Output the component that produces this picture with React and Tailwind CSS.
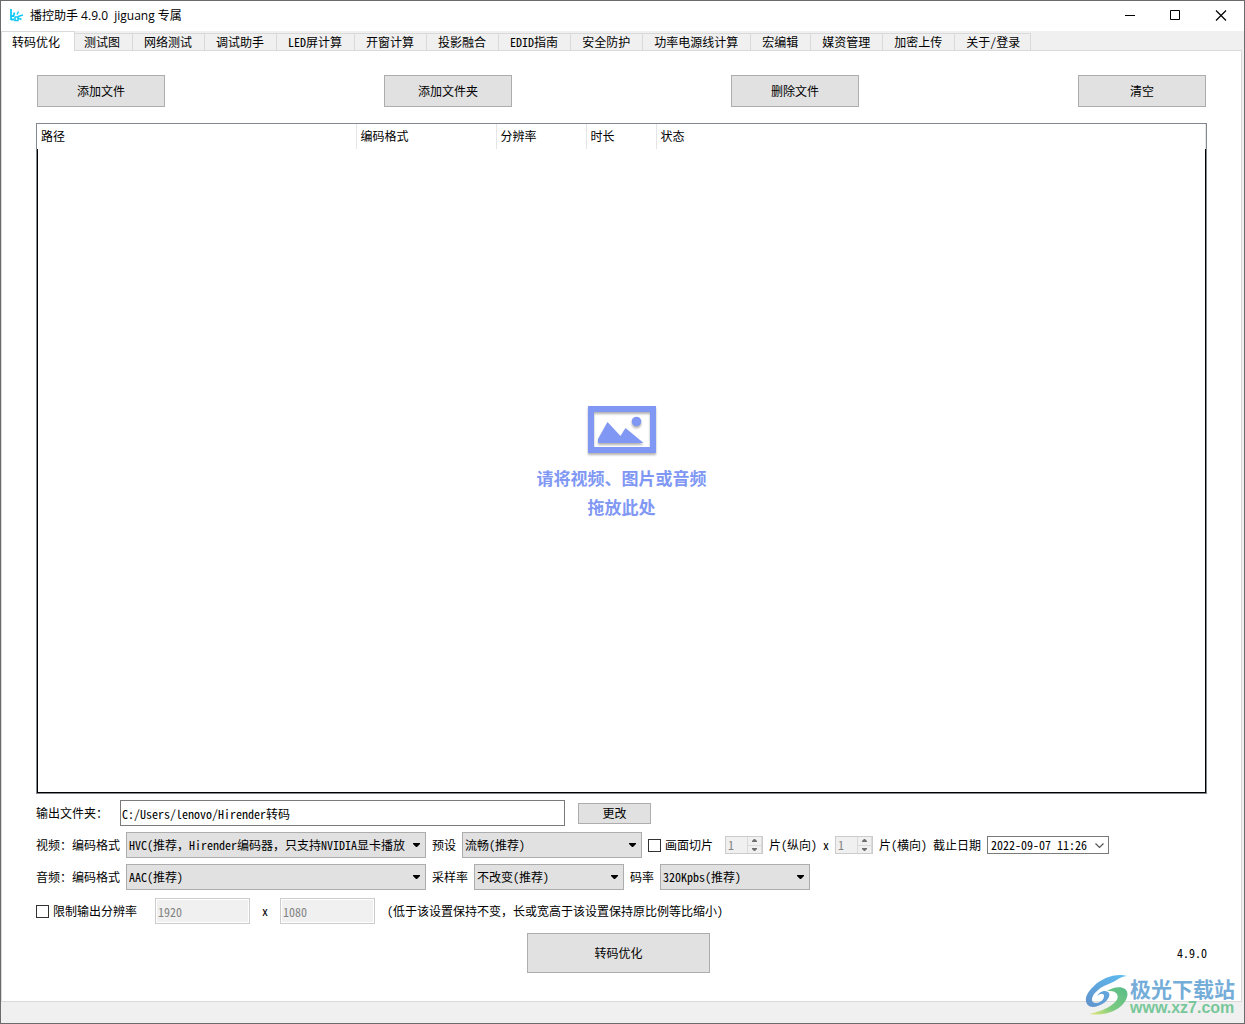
import React, { useState } from "react";

const tabs = [
    "转码优化",
    "测试图",
    "网络测试",
    "调试助手",
    "LED屏计算",
    "开窗计算",
    "投影融合",
    "EDID指南",
    "安全防护",
    "功率电源线计算",
    "宏编辑",
    "媒资管理",
    "加密上传",
    "关于/登录",
];

const columns = [
    { name: "路径", width: "w-[319px]" },
    { name: "编码格式", width: "w-[140px]" },
    { name: "分辨率", width: "w-[90px]" },
    { name: "时长", width: "w-[70px]" },
    { name: "状态", width: "" },
];

const AppIcon = () => (
    <svg width="16" height="16" viewBox="0 0 16 16" fill="none" stroke="#12c9f5">
        <path strokeWidth="1.800" d="M3 1v11M3 11.500h3.500M6.500 4.500L5.500 8H3" />
        <path strokeWidth="1.500" d="M7 8.500v4h3v-3.500H7M9 6.500l1.500-3M10 8.500l5-1.500M10 10l3.500 1.500" />
    </svg>
);

const PictureIcon = () => (
    <svg width="70" height="50" viewBox="0 0 70 50" className="drop-shadow-[0_2px_1px_rgba(0,0,0,0.3)]">
        <path fill="#8098f4" fillRule="evenodd" d="M1 1h68v47H1V1zm6 6v35h56V7H7z" />
        <path fill="#8098f4" d="M11 38v-4l9.500-17 13 14 5-8L56 37.500V38H11z" />
        <circle cx="49.500" cy="16.500" r="4.800" fill="#8098f4" />
    </svg>
);

const PushButton = ({ className = "", children }) => (
    <button type="button" className={`border border-[#adadad] bg-[#e1e1e1] text-center ${className}`}>
        {children}
    </button>
);

const Combo = ({ id, options, className = "" }) => (
    <div className={`relative ${className}`}>
        <select
            id={id}
            className="h-[26px] w-full appearance-none border border-[#adadad] bg-[#e1e1e1] pl-[2px] pr-4 text-xs"
        >
            {options.map((option) => (
                <option key={option}>{option}</option>
            ))}
        </select>
        <svg width="7" height="4" viewBox="0 0 7 4" className="pointer-events-none absolute right-[6px] top-[11px]">
            <path d="M0 0h7v1L4 4H3L0 1z" fill="#000" />
        </svg>
    </div>
);

const SpinBox = ({ label }) => (
    <div className="flex h-[18px] w-[38px] border border-[#cccccc] bg-[#f0f0f0]">
        <input
            type="text"
            inputMode="numeric"
            aria-label={label}
            defaultValue="1"
            disabled
            className="w-0 flex-1 pl-[2px] text-[#838383]"
        />
        <div className="flex w-[15px] flex-col border-x border-[#dadada]">
            <button type="button" disabled aria-label={`${label} +`} className="flex flex-1 items-center justify-center">
                <svg width="5" height="3" viewBox="0 0 5 3">
                    <path d="M2 0h1l2 2v1H0V2z" fill="#6f6f6f" />
                </svg>
            </button>
            <button
                type="button"
                disabled
                aria-label={`${label} -`}
                className="flex flex-1 items-center justify-center border-t border-[#dadada]"
            >
                <svg width="5" height="3" viewBox="0 0 5 3">
                    <path d="M0 0h5v1L3 3H2L0 1z" fill="#6f6f6f" />
                </svg>
            </button>
        </div>
    </div>
);

const CheckBox = ({ children }) => (
    <label className="flex items-center gap-1">
        <input type="checkbox" className="h-[13px] w-[13px] appearance-none border border-[#333333] bg-white checked:bg-[#333333]" />
        {children}
    </label>
);

const TitleBar = () => (
    <header className="flex h-[30px] items-center bg-white pl-[7px]">
        <AppIcon />
        <h1 className="ml-[6px] flex-1 whitespace-pre font-['Open_Sans','Noto_Sans_CJK_SC',sans-serif] text-xs">
            播控助手 4.9.0  jiguang 专属
        </h1>
        <button type="button" aria-label="最小化" className="flex h-full w-[46px] items-center justify-center">
            <svg width="12" height="12" viewBox="0 0 12 12">
                <path d="M1 5.500h10" stroke="#000" />
            </svg>
        </button>
        <button type="button" aria-label="最大化" className="flex h-full w-[45px] items-center justify-center">
            <svg width="12" height="12" viewBox="0 0 12 12">
                <path d="M.5.5h9v9h-9z" stroke="#000" fill="none" />
            </svg>
        </button>
        <button type="button" aria-label="关闭" className="flex h-full w-[46px] items-center justify-center">
            <svg width="12" height="12" viewBox="0 0 12 12">
                <path d="M1 .5l10 10M11 .5L1 10.500" stroke="#000" strokeWidth="1.200" />
            </svg>
        </button>
    </header>
);

const TabBar = ({ active, onChange }) => (
    <nav role="tablist" className="flex h-[19px] items-end bg-[#f0f0f0]">
        {tabs.map((tab) =>
            tab === active ? (
                <button
                    key={tab}
                    type="button"
                    role="tab"
                    aria-selected="true"
                    className="relative z-10 -mr-0.5 -mb-px h-5 whitespace-nowrap border border-b-0 border-[#d9d9d9] bg-white pl-[10px] pr-[14px]"
                >
                    {tab}
                </button>
            ) : (
                <button
                    key={tab}
                    type="button"
                    role="tab"
                    aria-selected="false"
                    onClick={() => onChange(tab)}
                    className="h-[17px] whitespace-nowrap border-r border-t border-[#d9d9d9] pl-[11px] pr-3 last:pr-[10px]"
                >
                    {tab}
                </button>
            )
        )}
    </nav>
);

const FileList = () => (
    <div className="flex flex-1 flex-col border border-[#828790]">
        <table className="w-full table-fixed">
            <thead>
                <tr className="h-[25px]">
                    {columns.map((column) => (
                        <th
                            key={column.name}
                            className={`border-r border-[#e5e5e5] pl-1 text-left font-['Open_Sans','Noto_Sans_CJK_SC',sans-serif] font-normal ${column.width}`}
                        >
                            {column.name}
                        </th>
                    ))}
                </tr>
            </thead>
        </table>
        <div className="flex flex-1 flex-col items-center justify-center border-x border-b border-black pb-4">
            <PictureIcon />
            <p className="mt-2 text-center font-['Noto_Sans_CJK_SC',sans-serif] text-[17px] font-bold leading-[29px] text-[#8098f4]">
                请将视频、图片或音频
                <br />
                拖放此处
            </p>
        </div>
    </div>
);

const Watermark = () => (
    <div className="absolute bottom-[7px] right-[9px] flex items-end gap-px">
        <svg width="44" height="42" viewBox="0 0 44 42">
            <defs>
                <linearGradient id="swirlBlue" x1="1" y1="0" x2="0" y2="1">
                    <stop offset="0" stopColor="#5cbcf0" />
                    <stop offset="1" stopColor="#6292cc" />
                </linearGradient>
                <linearGradient id="swirlGreen" x1="1" y1="0" x2="0" y2="1">
                    <stop offset="0" stopColor="#58bd8a" />
                    <stop offset="0.600" stopColor="#7cca80" />
                    <stop offset="1" stopColor="#e8ea7c" />
                </linearGradient>
            </defs>
            <path
                fill="url(#swirlBlue)"
                d="M42 2C31-1 17 4 9 12 2 18-1 25 2 30c3 5 11 3 17-1 5-4 7-9 4-11-3-2-8-1-11 4 4-3 7-3 7 0 0 4-4 7-8 7-6 0-5-7 1-12 6-6 13-7 18-10 3-2 8-5 12-5z"
            />
            <path
                fill="url(#swirlGreen)"
                d="M22 17c6-4 14-5 18-2 5 4 2 12-5 18-8 6-19 9-31 7 9-2 18-5 24-10 5-4 6-8 3-11-2-2-5-2-9-2z"
            />
        </svg>
        <div className="flex flex-col">
            <span className="font-['Noto_Sans_CJK_SC',sans-serif] text-[21px] font-bold leading-6 text-[#75add9]">
                极光下载站
            </span>
            <span className="font-['Liberation_Sans',sans-serif] text-base font-bold leading-4 text-[#78c79a]">
                www.xz7.com
            </span>
        </div>
    </div>
);

const OutputSettings = () => (
    <form className="mt-[6px] flex flex-col gap-[6px]" onSubmit={(e) => e.preventDefault()}>
        <div className="flex items-center">
            <label htmlFor="folder" className="w-[84px]">
                输出文件夹：
            </label>
            <input
                id="folder"
                type="text"
                defaultValue="C:/Users/lenovo/Hirender转码"
                className="h-[26px] w-[445px] border border-[#7a7a7a] px-[1px]"
            />
            <PushButton className="ml-[13px] h-[21px] w-[73px]">更改</PushButton>
        </div>

        <div className="flex items-center gap-[6px] whitespace-nowrap">
            <label htmlFor="video">视频：编码格式</label>
            <Combo
                id="video"
                className="w-[300px]"
                options={["HVC(推荐，Hirender编码器，只支持NVIDIA显卡播放"]}
            />
            <label htmlFor="preset">预设</label>
            <Combo id="preset" className="w-[180px]" options={["流畅(推荐)"]} />
            <CheckBox>画面切片</CheckBox>
            <div className="ml-[6px] flex items-center gap-[6px]">
                <SpinBox label="纵向" />
                <span>片(纵向)</span>
                <span className="w-[6px]">x</span>
                <SpinBox label="横向" />
                <span>片(横向)</span>
            </div>
            <label htmlFor="deadline">截止日期</label>
            <div className="flex h-[18px] w-[122px] items-center border border-[#7a7a7a] bg-white">
                <input
                    id="deadline"
                    type="text"
                    defaultValue="2022-09-07 11:26"
                    className="w-0 flex-1 pl-[3px]"
                />
                <button type="button" aria-label="选择日期" className="flex h-full w-[13px] items-center pt-[2px]">
                    <svg width="9" height="6" viewBox="0 0 9 6" fill="none">
                        <path d="M.5.5l4 4 4-4" stroke="#555" strokeWidth="1.200" />
                    </svg>
                </button>
            </div>
        </div>

        <div className="flex items-center gap-[6px] whitespace-nowrap">
            <label htmlFor="audio">音频：编码格式</label>
            <Combo id="audio" className="w-[300px]" options={["AAC(推荐)"]} />
            <label htmlFor="rate">采样率</label>
            <Combo id="rate" className="w-[150px]" options={["不改变(推荐)"]} />
            <label htmlFor="bitrate">码率</label>
            <Combo id="bitrate" className="w-[150px]" options={["320Kpbs(推荐)"]} />
        </div>

        <div className="mt-[2px] flex items-center whitespace-nowrap">
            <CheckBox>限制输出分辨率</CheckBox>
            <input
                type="text"
                aria-label="宽"
                defaultValue="1920"
                disabled
                className="ml-[18px] h-[26px] w-[95px] border border-[#cccccc] bg-[#f0f0f0] px-[2px] text-[#838383] shadow-[inset_0_0_0_1px_#fff]"
            />
            <span className="w-[30px] text-center">x</span>
            <input
                type="text"
                aria-label="高"
                defaultValue="1080"
                disabled
                className="h-[26px] w-[95px] border border-[#cccccc] bg-[#f0f0f0] px-[2px] text-[#838383] shadow-[inset_0_0_0_1px_#fff]"
            />
            <span className="ml-3">(低于该设置保持不变，长或宽高于该设置保持原比例等比缩小)</span>
        </div>

        <div className="mt-[3px] flex items-center">
            <div className="flex-1" />
            <PushButton className="h-10 w-[183px]">转码优化</PushButton>
            <span className="ml-[6px] flex-1 text-right">4.9.0</span>
        </div>
    </form>
);

const App = () => {
    const [active, setActive] = useState("转码优化");

    return (
        <div className="relative flex min-h-screen flex-col border border-[#6b6b6b] bg-[#f0f0f0] font-['Noto_Sans_Mono_CJK_SC','Liberation_Serif','Noto_Sans_CJK_SC',serif] text-xs text-black">
            <TitleBar />
            <TabBar active={active} onChange={setActive} />
            <main className="mr-[2px] flex flex-1 flex-col border border-[#d9d9d9] bg-white pb-7 pl-[34px] pr-[34px] pt-6">
                <div className="flex justify-between px-px">
                    <PushButton className="h-8 w-32">添加文件</PushButton>
                    <PushButton className="h-8 w-32">添加文件夹</PushButton>
                    <PushButton className="h-8 w-32">删除文件</PushButton>
                    <PushButton className="h-8 w-32">清空</PushButton>
                </div>
                <div className="mt-4 flex flex-1 flex-col">
                    <FileList />
                </div>
                <OutputSettings />
            </main>
            <footer className="h-[21px]" />
            <Watermark />
        </div>
    );
};

export default App;
